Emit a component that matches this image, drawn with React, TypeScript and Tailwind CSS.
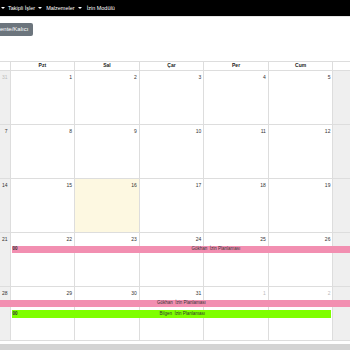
import React from "react";

type Day = { n: number; other?: boolean; today?: boolean; weekend?: boolean };

const weeks: Day[][] = [
  [{ n: 31, other: true, weekend: true }, { n: 1 }, { n: 2 }, { n: 3 }, { n: 4 }, { n: 5 }, { n: 6, weekend: true }],
  [{ n: 7, weekend: true }, { n: 8 }, { n: 9 }, { n: 10 }, { n: 11 }, { n: 12 }, { n: 13, weekend: true }],
  [{ n: 14, weekend: true }, { n: 15 }, { n: 16, today: true }, { n: 17 }, { n: 18 }, { n: 19 }, { n: 20, weekend: true }],
  [{ n: 21, weekend: true }, { n: 22 }, { n: 23 }, { n: 24 }, { n: 25 }, { n: 26 }, { n: 27, weekend: true }],
  [{ n: 28, weekend: true }, { n: 29 }, { n: 30 }, { n: 31 }, { n: 1, other: true }, { n: 2, other: true }, { n: 3, other: true, weekend: true }],
];

const heads = ["Paz", "Pzt", "Sal", "Çar", "Per", "Cum", "Cmt"];

function Caret({ ml }: { ml: string }) {
  return (
    <span
      className={
        ml +
        " inline-block w-0 h-0 border-l-[2px] border-r-[2px] border-t-[2px] border-l-transparent border-r-transparent border-t-white"
      }
    />
  );
}

export default function App() {
  return (
    <div className="w-[350px] h-[350px] overflow-hidden bg-white" style={{ fontFamily: '"Liberation Sans", Arial, sans-serif' }}>
      {/* navbar */}
      <div className="h-[16px] bg-black flex items-center text-white text-[5.5px]">
        <Caret ml="ml-[1px]" />
        <span className="ml-[3px]">Takipli İşler</span>
        <Caret ml="ml-[3px]" />
        <span className="ml-[4px]">Malzemeler</span>
        <Caret ml="ml-[3px]" />
        <span className="ml-[5px]">İzin Modülü</span>
      </div>
      <div className="h-[1px] bg-[#e5e5e5]" />

      {/* button */}
      <div className="mt-[6px] flex">
        <div className="ml-[-26px] h-[13px] px-[5px] rounded-[2px] bg-[#6c757d] text-white text-[6px] flex items-center whitespace-nowrap">
          Permanente/Kalıcı
        </div>
      </div>

      {/* calendar */}
      <div className="mt-[25px] w-[452px] ml-[-54px]">
        <div className="grid grid-cols-7 h-[10px] border-t border-b border-[#dddddd]">
          {heads.map((h, i) => (
            <div key={i} className="border-r border-[#dddddd] flex items-center justify-center text-[5px] font-bold text-[#222]">
              {h}
            </div>
          ))}
        </div>
        {weeks.map((w, wi) => (
          <div key={wi} className="relative h-[54px] border-b border-[#dddddd]">
            <div className="absolute inset-0 grid grid-cols-7">
              {w.map((d, di) => (
                <div
                  key={di}
                  className={
                    "border-r border-[#dddddd] " +
                    (d.today ? "bg-[#fdf8e1]" : d.weekend ? "bg-[#efefef]" : "bg-white")
                  }
                />
              ))}
            </div>
            <div className="relative grid grid-cols-7 pt-[3px]">
              {w.map((d, di) => (
                <div key={di} className={"text-right pr-[3px] text-[5px] leading-[6px] " + (d.other ? "text-[#bbbbbb]" : "text-[#333]")}>
                  {d.n}
                </div>
              ))}
            </div>
            {wi === 3 && (
              <div className="relative grid grid-cols-7 mt-[4px]">
                <div className="col-start-2 col-span-6 ml-[1px] h-[7px] bg-[#f28fb1] flex items-center text-[4.5px] text-[#333]">
                  <span className="ml-[1px] font-bold">00</span>
                  <span className="ml-[174px]">Gökhan&nbsp; İzin Planlaması</span>
                </div>
              </div>
            )}
            {wi === 4 && (
              <div className="relative flex flex-col gap-[3px] mt-[4px]">
                <div className="grid grid-cols-7">
                  <div className="col-start-1 col-span-7 h-[7px] bg-[#f28fb1] flex items-center text-[4.5px] text-[#333]">
                    <span className="ml-[211px]">Gökhan&nbsp; İzin Planlaması</span>
                  </div>
                </div>
                <div className="grid grid-cols-7">
                  <div className="col-start-2 col-span-5 ml-[1px] mr-[2px] h-[8px] bg-[#7fff00] flex items-center text-[4.5px] text-[#333]">
                    <span className="ml-[1px] font-bold">00</span>
                    <span className="ml-[142px]">Bilgen&nbsp; İzin Planlaması</span>
                  </div>
                </div>
              </div>
            )}
          </div>
        ))}
      </div>
      <div className="mt-[3px] h-[10px] bg-[#d4d4d4]" />
    </div>
  );
}
